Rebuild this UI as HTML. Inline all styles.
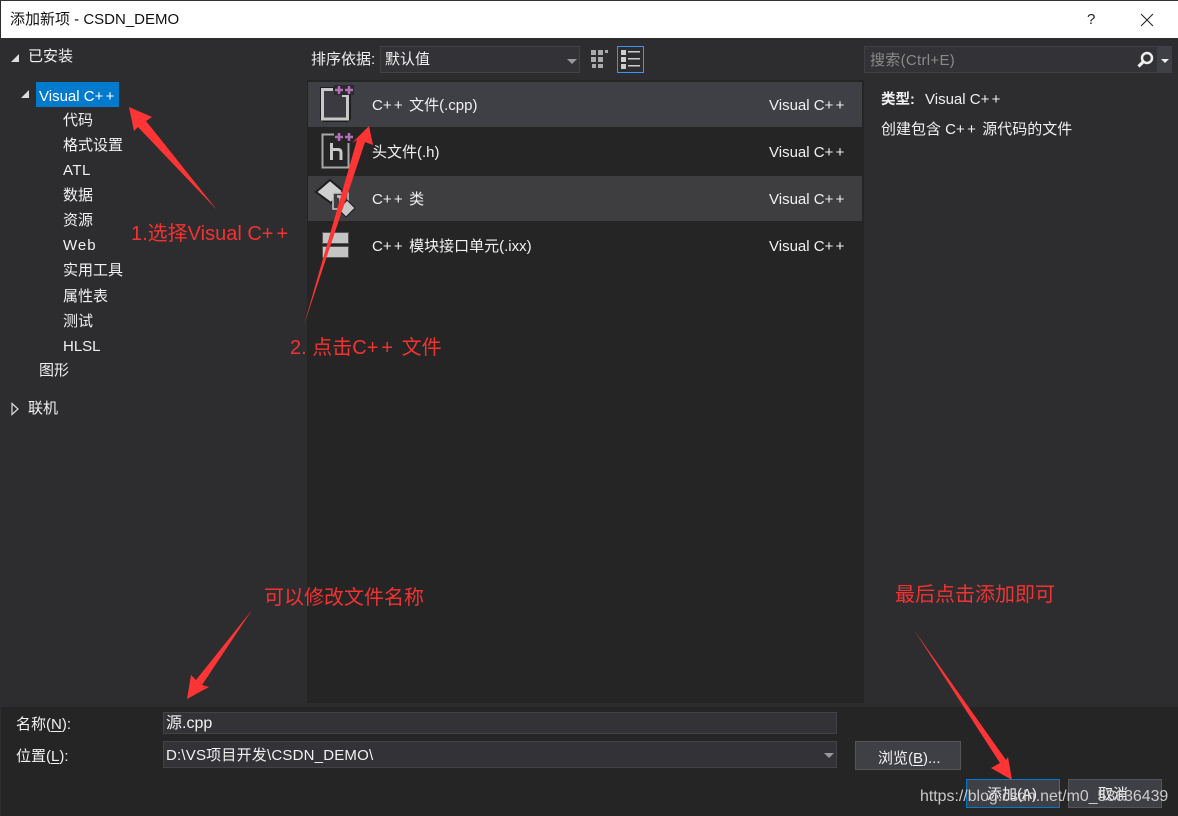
<!DOCTYPE html>
<html lang="zh"><head><meta charset="utf-8">
<style>
html,body{margin:0;padding:0;width:1178px;height:816px;overflow:hidden;background:#2d2d30}
body{position:relative;font-family:"Liberation Sans","Noto Sans CJK SC",sans-serif;font-size:15px;color:#f1f1f1}
.t{position:absolute;white-space:nowrap;line-height:20px;height:20px}
.r{color:#f33232;font-size:20px;line-height:26px;height:26px}
.box{position:absolute;box-sizing:border-box}
.p{letter-spacing:2.300px}
.q{letter-spacing:3px}
.s{letter-spacing:.5px}
u{text-decoration-thickness:1px;text-underline-offset:2px}
svg{position:absolute;overflow:visible}
</style></head><body>
<div class="box" style="left:1px;top:1px;width:1177px;height:37px;background:#fff"></div>
<div class="box" style="left:0;top:0;width:1178px;height:1px;background:#333"></div>
<div class="t" style="left:10px;top:10px;color:#111;font-size:15px">添加新项 - CSDN_DEMO</div>
<div class="t" style="left:1087px;top:10px;color:#222;font-size:15px">?</div>
<svg style="left:0;top:0" width="1178" height="40"><path d="M1141 14L1153 26M1153 14L1141 26" stroke="#222" stroke-width="1" fill="none"/></svg>

<!-- left tree -->
<svg style="left:0;top:0" width="40" height="420"><path d="M19 54V62H11Z" fill="#ddd"/><path d="M29 90V98H21Z" fill="#ddd"/><path d="M12 403.500L18 409L12 414.500Z" fill="none" stroke="#ddd" stroke-width="1.200"/></svg>
<div class="t" style="left:28px;top:47px">已安装</div>
<div class="box" style="left:36px;top:82px;width:83px;height:25px;background:#007acc"></div>
<div class="t" style="left:39px;top:87px;color:#fff">Visual C<span class="p">++</span></div>
<div class="t" style="left:63px;top:111px">代码</div>
<div class="t" style="left:63px;top:136px">格式设置</div>
<div class="t s" style="left:63px;top:161px">ATL</div>
<div class="t" style="left:63px;top:186px">数据</div>
<div class="t" style="left:63px;top:211px">资源</div>
<div class="t" style="left:63px;top:236px;letter-spacing:1px">Web</div>
<div class="t" style="left:63px;top:261px">实用工具</div>
<div class="t" style="left:63px;top:287px">属性表</div>
<div class="t" style="left:63px;top:312px">测试</div>
<div class="t" style="left:63px;top:337px">HLSL</div>
<div class="t" style="left:39px;top:361px">图形</div>
<div class="t" style="left:28px;top:399px">联机</div>

<!-- toolbar -->
<div class="t" style="left:311px;top:50px">排序依据:</div>
<div class="box" style="left:380px;top:46px;width:200px;height:27px;background:#333337;border:1px solid #434346"></div>
<div class="t" style="left:385px;top:50px">默认值</div>
<svg style="left:0;top:0" width="660" height="80">
<path d="M567 59H577L572 64Z" fill="#999"/>
<g fill="#aaa"><rect x="591" y="50" width="5" height="5"/><rect x="598" y="50" width="5" height="5"/><rect x="605" y="50" width="3" height="3"/><rect x="591" y="57" width="5" height="5"/><rect x="598" y="57" width="5" height="5"/><rect x="592" y="64" width="4" height="4"/><rect x="598" y="64" width="5" height="4"/></g>
<rect x="617.500" y="46.500" width="26" height="26" fill="#2d2d30" stroke="#3399ff"/>
<g fill="#ccc"><rect x="621" y="50" width="5" height="5"/><rect x="621" y="57" width="5" height="5"/><rect x="621" y="64" width="5" height="5"/><rect x="628" y="51" width="12" height="1.500"/><rect x="628" y="58" width="12" height="1.500"/><rect x="628" y="65" width="12" height="1.500"/></g>
</svg>

<!-- search -->
<div class="box" style="left:864px;top:46px;width:306px;height:27px;background:#333337;border:1px solid #3f3f46"></div>
<div class="box" style="left:1157px;top:46px;width:15px;height:27px;background:#3f3f46"></div>
<div class="t" style="left:870px;top:51px;color:#8a8a8a;letter-spacing:.3px">搜索(Ctrl+E)</div>
<svg style="left:0;top:0" width="1178" height="80">
<circle cx="1147" cy="58" r="5" fill="none" stroke="#eee" stroke-width="2.500"/>
<path d="M1143 62L1138.500 66.500" stroke="#eee" stroke-width="3.200" fill="none"/>
<path d="M1161 59H1169L1165 63Z" fill="#eee"/>
</svg>

<!-- list -->
<div class="box" style="left:307px;top:80px;width:557px;height:623px;background:#252526"></div>
<div class="box" style="left:308px;top:82px;width:554px;height:45px;background:#3f3f46"></div>
<div class="box" style="left:308px;top:176px;width:554px;height:45px;background:#3e3e40"></div>
<div class="t" style="left:372px;top:96px">C<span class="p">++</span> 文件(.cpp)</div>
<div class="t" style="left:372px;top:143px">头文件(.h)</div>
<div class="t" style="left:372px;top:190px">C<span class="p">++</span> 类</div>
<div class="t" style="left:372px;top:237px">C<span class="p">++</span> 模块接口单元(.ixx)</div>
<div class="t" style="left:769px;top:96px">Visual C<span class="p">++</span></div>
<div class="t" style="left:769px;top:143px">Visual C<span class="p">++</span></div>
<div class="t" style="left:769px;top:190px">Visual C<span class="p">++</span></div>
<div class="t" style="left:769px;top:237px">Visual C<span class="p">++</span></div>

<svg style="left:0;top:0" width="400" height="270">
<!-- cpp -->
<path d="M320 87H334V92H351V119L348 122H323L320 119Z" fill="#1f1f20"/>
<path d="M333 89.500H322.500V119H347.500V95" fill="#3a3a40" stroke="#c8c8c8" stroke-width="3"/>
<path d="M342 95.500H349" stroke="#c8c8c8" stroke-width="3"/>
<rect x="334" y="85" width="20" height="10" fill="#2a2a2e"/>
<path d="M335 90H343M339 86V94M345 90H353M349 86V94" stroke="#b06fb5" stroke-width="2.500" fill="none"/>
<!-- h -->
<path d="M334 134.500H322.500V167.500H348.500V143" fill="#252526" stroke="#a8a8a8" stroke-width="2"/>
<path d="M331.500 143V160M331.500 149.500H338C340 149.500 341 150.500 341 152.500V160" stroke="#c8c8c8" stroke-width="3" fill="none"/>
<path d="M335 137H343M339 133V141M345 137H353M349 133V141" stroke="#b06fb5" stroke-width="2.500" fill="none"/>
<!-- class -->
<path d="M330 180L343 191L331 203L316 192Z" fill="#d0d0d0" stroke="#1e1e1e" stroke-width="2"/>
<rect x="333" y="193" width="15" height="16" fill="#3e3e40" stroke="#c8c8c8" stroke-width="1.500"/>
<path d="M337 196.500H344M340.500 196.500V206" stroke="#c8c8c8" stroke-width="2.500"/>
<path d="M347 200L355 208L346 217L339 210Z" fill="#c8c8c8" stroke="#1e1e1e" stroke-width="1"/>
<!-- module -->
<rect x="322.500" y="232.500" width="26" height="11" fill="#c4c4c4" stroke="#555"/>
<rect x="322.500" y="246.500" width="26" height="11" fill="#c4c4c4" stroke="#555"/>
</svg>

<!-- details -->
<div class="t" style="left:881px;top:90px"><b style="font-size:14.500px">类型:</b></div>
<div class="t" style="left:925px;top:90px">Visual C<span class="p">++</span></div>
<div class="t" style="left:881px;top:120px">创建包含 C<span class="p">++</span> 源代码的文件</div>

<!-- bottom -->
<div class="box" style="left:1px;top:707px;width:1177px;height:109px;background:#252526"></div>
<div class="t" style="left:16px;top:715px">名称(<u>N</u>):</div>
<div class="t" style="left:16px;top:747px">位置(<u>L</u>):</div>
<div class="box" style="left:163px;top:712px;width:674px;height:22px;background:#333337;border:1px solid #434346"></div>
<div class="t" style="left:166px;top:714px;font-size:16px">源.cpp</div>
<div class="box" style="left:163px;top:741px;width:674px;height:27px;background:#333337;border:1px solid #434346"></div>
<div class="t" style="left:166px;top:746px;letter-spacing:.200px">D:\VS项目开发\CSDN_DEMO\</div>
<svg style="left:0;top:0" width="1178" height="816"><path d="M824 753H834L829 758Z" fill="#999"/></svg>
<div class="box" style="left:855px;top:741px;width:106px;height:29px;background:#3f3f46;border:1px solid #555"></div>
<div class="t" style="left:878px;top:749px">浏览(<u>B</u>)...</div>
<div class="box" style="left:966px;top:779px;width:94px;height:29px;background:#3f3f46;border:1px solid #007acc"></div>
<div class="t" style="left:987px;top:785px">添加(A)</div>
<div class="box" style="left:1068px;top:779px;width:94px;height:29px;background:#3f3f46;border:1px solid #555"></div>
<div class="t" style="left:1098px;top:785px">取消</div>
<div class="t" style="left:920px;top:787px;color:#d8d8d8;font-size:15.900px;opacity:.92">https://blog.csdn.net/m0_53636439</div>

<!-- annotations -->
<svg style="left:0;top:0" width="1178" height="816" fill="#ff3535">
<polygon points="129,107 152,117 146,121 217,210 138,127 134,131"/>
<polygon points="369,126 373,145 365,142 304,325 357,140 352,143"/>
<polygon points="187,699 209,687 202,685 252,610 196,680 191,675"/>
<polygon points="1012,780 1008,757 1006,760 914,630 1000,763 991,768"/>
</svg>
<div class="t r" style="left:131px;top:221px">1.选择Visual C<span class="q">++</span></div>
<div class="t r" style="left:290px;top:335px">2. 点击C<span class="q">++</span> 文件</div>
<div class="t r" style="left:264px;top:585px">可以修改文件名称</div>
<div class="t r" style="left:895px;top:582px">最后点击添加即可</div>
</body></html>
